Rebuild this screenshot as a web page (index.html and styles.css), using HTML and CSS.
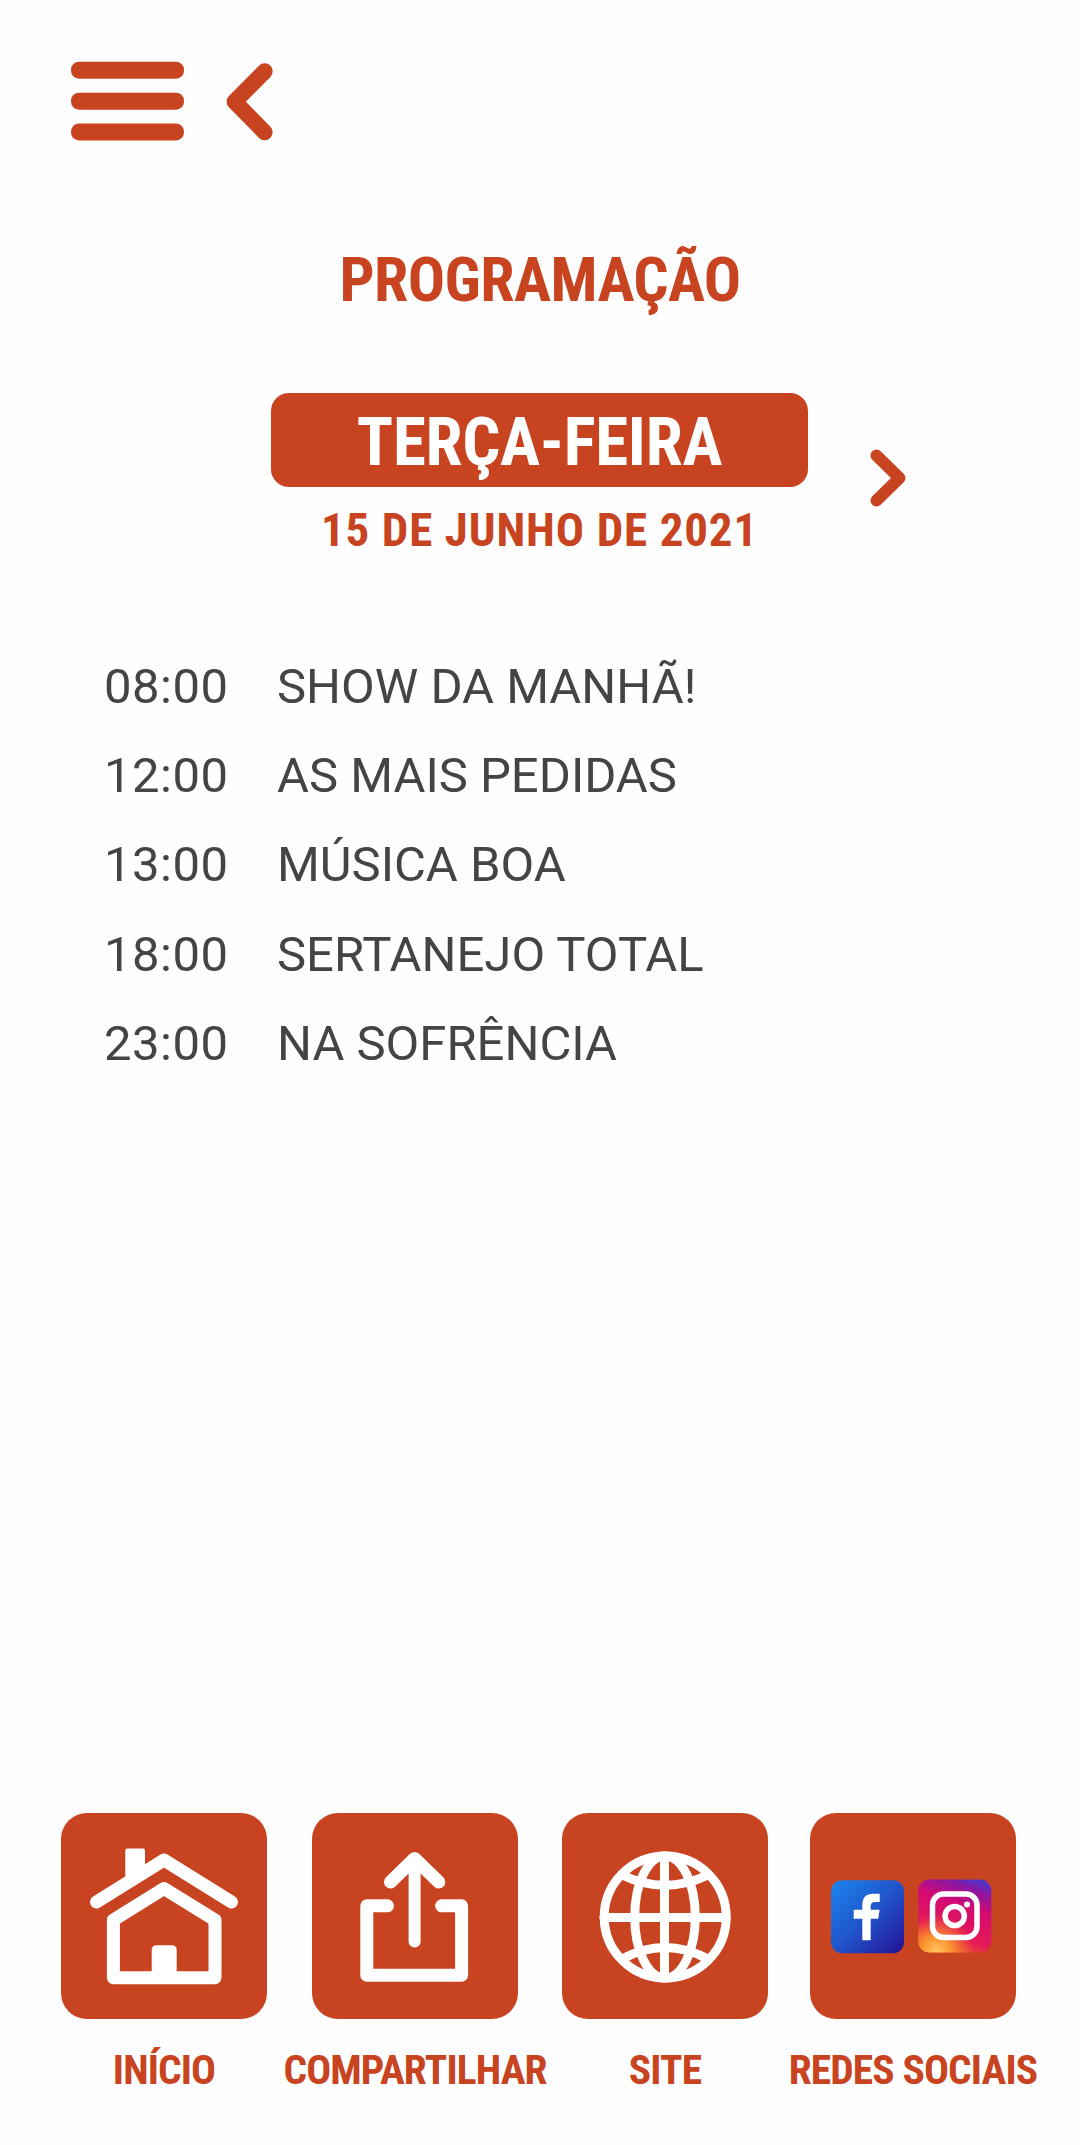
FILE: index.html
```
<!DOCTYPE html>
<html lang="pt-br">

<head>
    <meta charset="utf-8">
    <title>Programação</title>
    <link rel="stylesheet" href="styles.css">
</head>

<body>
    <!-- topo -->
    <header class="topo">
        <svg class="menu" viewBox="0 0 114 80">
            <rect x="0" y="0.7" width="113" height="17" rx="8"/>
            <rect x="0" y="31.7" width="113" height="17" rx="8"/>
            <rect x="0" y="62.4" width="113" height="17" rx="8"/>
        </svg>
        <svg class="voltar" viewBox="0 0 48 80">
            <path d="M38.7 10.3 8.6 40.7 38.7 71.3"/>
        </svg>
    </header>

    <main>
        <h1 class="titulo"><span class="cond">PROGRAMAÇÃO</span></h1>

        <section class="dia">
            <div class="dia-centro">
                <h2 class="semana"><span class="cond">TERÇA-FEIRA</span></h2>
                <p class="data"><span class="cond">15 DE JUNHO DE 2021</span></p>
            </div>
            <svg class="proximo" viewBox="0 0 40 60">
                <path d="M7.500 7.500 30.500 30 7.500 52.500"/>
            </svg>
        </section>

        <ul class="lista">
            <li><span class="hora">08:00</span>SHOW DA MANHÃ!</li>
            <li><span class="hora">12:00</span>AS MAIS PEDIDAS</li>
            <li><span class="hora">13:00</span>MÚSICA BOA</li>
            <li><span class="hora">18:00</span>SERTANEJO TOTAL</li>
            <li><span class="hora">23:00</span>NA SOFRÊNCIA</li>
        </ul>
    </main>

    <!-- menu de baixo -->
    <nav class="rodape">
        <a class="item">
            <svg class="icone" viewBox="0 0 206 206">
                <path class="cheio" d="M64.3 37.500q0-2 2-2H82q2 0 2 2V56L64.3 70z"/>
                <path class="traco t13" d="M35.500 89 103 47l67.500 42"/>
                <path class="traco t13" d="M52.400 107 103 75.500 154 107v57.700H52.400z"/>
                <path class="cheio" d="M90.700 160v-22.700q0-5 5-5h15q5 0 5 5V160z"/>
            </svg>
            <span class="cond">INÍCIO</span>
        </a>
        <a class="item">
            <svg class="icone" viewBox="0 0 206 206">
                <path class="traco t13" d="M78.500 69 102.600 45.500 126.800 69"/>
                <path class="traco t12" d="M102.600 48v80.500"/>
                <path class="traco t13" d="M75.500 92.800H54.800v69.400h94.800V92.800h-20"/>
            </svg>
            <span class="cond">COMPARTILHAR</span>
        </a>
        <a class="item">
            <svg class="icone" viewBox="0 0 206 206">
                <g class="traco t9">
                    <circle cx="103.200" cy="104" r="61"/>
                    <ellipse cx="103" cy="104" rx="30.300" ry="61"/>
                    <path d="M102.500 43v122M42 104.500h122"/>
                    <path d="M60 62q43 20.500 86 0M60 146q43-23 86 0"/>
                </g>
            </svg>
            <span class="cond">SITE</span>
        </a>
        <a class="item">
            <svg class="icone" viewBox="0 0 206 206">
                <defs>
                    <linearGradient id="fb" x1="0" y1="0" x2="1" y2="1">
                        <stop offset="0" stop-color="#1b86ee"/>
                        <stop offset=".5" stop-color="#2054cb"/>
                        <stop offset="1" stop-color="#230f94"/>
                    </linearGradient>
                    <linearGradient id="ig" x1=".35" y1="1" x2=".7" y2="0">
                        <stop offset="0" stop-color="#f0602a"/>
                        <stop offset=".25" stop-color="#e51a55"/>
                        <stop offset=".65" stop-color="#d50a72"/>
                        <stop offset=".9" stop-color="#8a16a4"/>
                        <stop offset="1" stop-color="#5a30c4"/>
                    </linearGradient>
                    <radialGradient id="ig2" cx=".25" cy=".98" r=".5">
                        <stop offset="0" stop-color="#ffc45e"/>
                        <stop offset=".35" stop-color="#fb9a35"/>
                        <stop offset="1" stop-color="#f7791e" stop-opacity="0"/>
                    </radialGradient>
                </defs>
                <rect x="21" y="67.300" width="73" height="73" rx="11" fill="url(#fb)"/>
                <path class="cheio" d="M52.300 127.300v-21.600h-8.600v-9h8.600V92q0-11.300 11-11.300h6.400V89h-4.700q-4.300 0-4.300 4.300v3.400h9l-1.500 9h-7.500v21.600z"/>
                <rect x="108.300" y="66.500" width="73" height="73" rx="11" fill="url(#ig)"/>
                <rect x="108.300" y="66.500" width="73" height="73" rx="11" fill="url(#ig2)"/>
                <g class="traco t6">
                    <rect x="122.500" y="81" width="44.500" height="43.500" rx="11"/>
                    <circle cx="144.700" cy="103" r="9.600"/>
                </g>
                <circle class="cheio" cx="157" cy="91.500" r="3"/>
            </svg>
            <span class="cond">REDES SOCIAIS</span>
        </a>
    </nav>
</body>

</html>
```

FILE: styles.css
```
/* reset */
* {
    margin: 0;
    padding: 0;
    box-sizing: border-box;
}

body {
    display: flex;
    flex-direction: column;
    height: 2145px;
    background-color: #fefefe;
    font-family: Roboto, "Liberation Sans", sans-serif;
    color: #444;
}

svg {
    display: block;
}

/* letra estreita dos titulos */
.cond {
    display: inline-block;
    font-family: "Roboto Condensed", Roboto, sans-serif;
    font-stretch: 75%;
    font-weight: 700;
    white-space: nowrap;
}

/* topo */
.topo {
    display: flex;
    gap: 41px;
    padding: 61px 0 0 71px;
}
.menu {
    width: 114px;
    height: 80px;
    fill: #c84320;
}
.voltar {
    width: 48px;
    height: 80px;
}
.voltar path,
.proximo path {
    fill: none;
    stroke: #c84320;
    stroke-width: 16;
    stroke-linecap: round;
    stroke-linejoin: round;
}

main {
    flex: 1;
}

/* titulo */
.titulo {
    margin-top: 99px;
    font-size: 62px;
    line-height: 80px;
    letter-spacing: -.6px;
    text-align: center;
    color: #c84320;
}

/* dia da semana */
.dia {
    display: flex;
    margin-top: 73px;
    padding-left: 271px;
}
.dia-centro {
    width: 537px;
    text-align: center;
}
.semana {
    height: 94px;
    border-radius: 18px;
    background-color: #c84320;
    color: #fff;
    font-size: 67px;
    line-height: 98px;
    letter-spacing: -.3px;
}
.data {
    margin-top: 13px;
    font-size: 47px;
    line-height: 60px;
    letter-spacing: .85px;
    color: #c84320;
}
.proximo {
    width: 40px;
    height: 60px;
    margin: 55px 0 0 61px;
}
.proximo path {
    stroke-width: 12;
}

/* lista de programas */
.lista {
    margin-top: 82px;
    padding-left: 104px;
    list-style: none;
    font-size: 49px;
}
.lista li {
    display: flex;
    height: 89.2px;
    line-height: 89.2px;
}
.hora {
    width: 173px;
    letter-spacing: .5px;
}

/* menu de baixo */
.rodape {
    display: grid;
    grid-template-columns: 251px 250px 248px 206px;
    height: 332px;
    padding-left: 61px;
    color: #c84320;
    font-size: 41.5px;
    line-height: 60px;
    letter-spacing: -.9px;
}
.item {
    display: flex;
    flex-direction: column;
    align-items: center;
    gap: 21px;
    width: 206px;
}
.icone {
    width: 206px;
    height: 206px;
    border-radius: 26px;
    background-color: #c84320;
}
.cheio {
    fill: #fff;
}
.traco {
    fill: none;
    stroke: #fff;
    stroke-linecap: round;
    stroke-linejoin: round;
}
.t13 { stroke-width: 13; }
.t12 { stroke-width: 12; }
.t9 { stroke-width: 9; }
.t6 { stroke-width: 5.5; }
```
